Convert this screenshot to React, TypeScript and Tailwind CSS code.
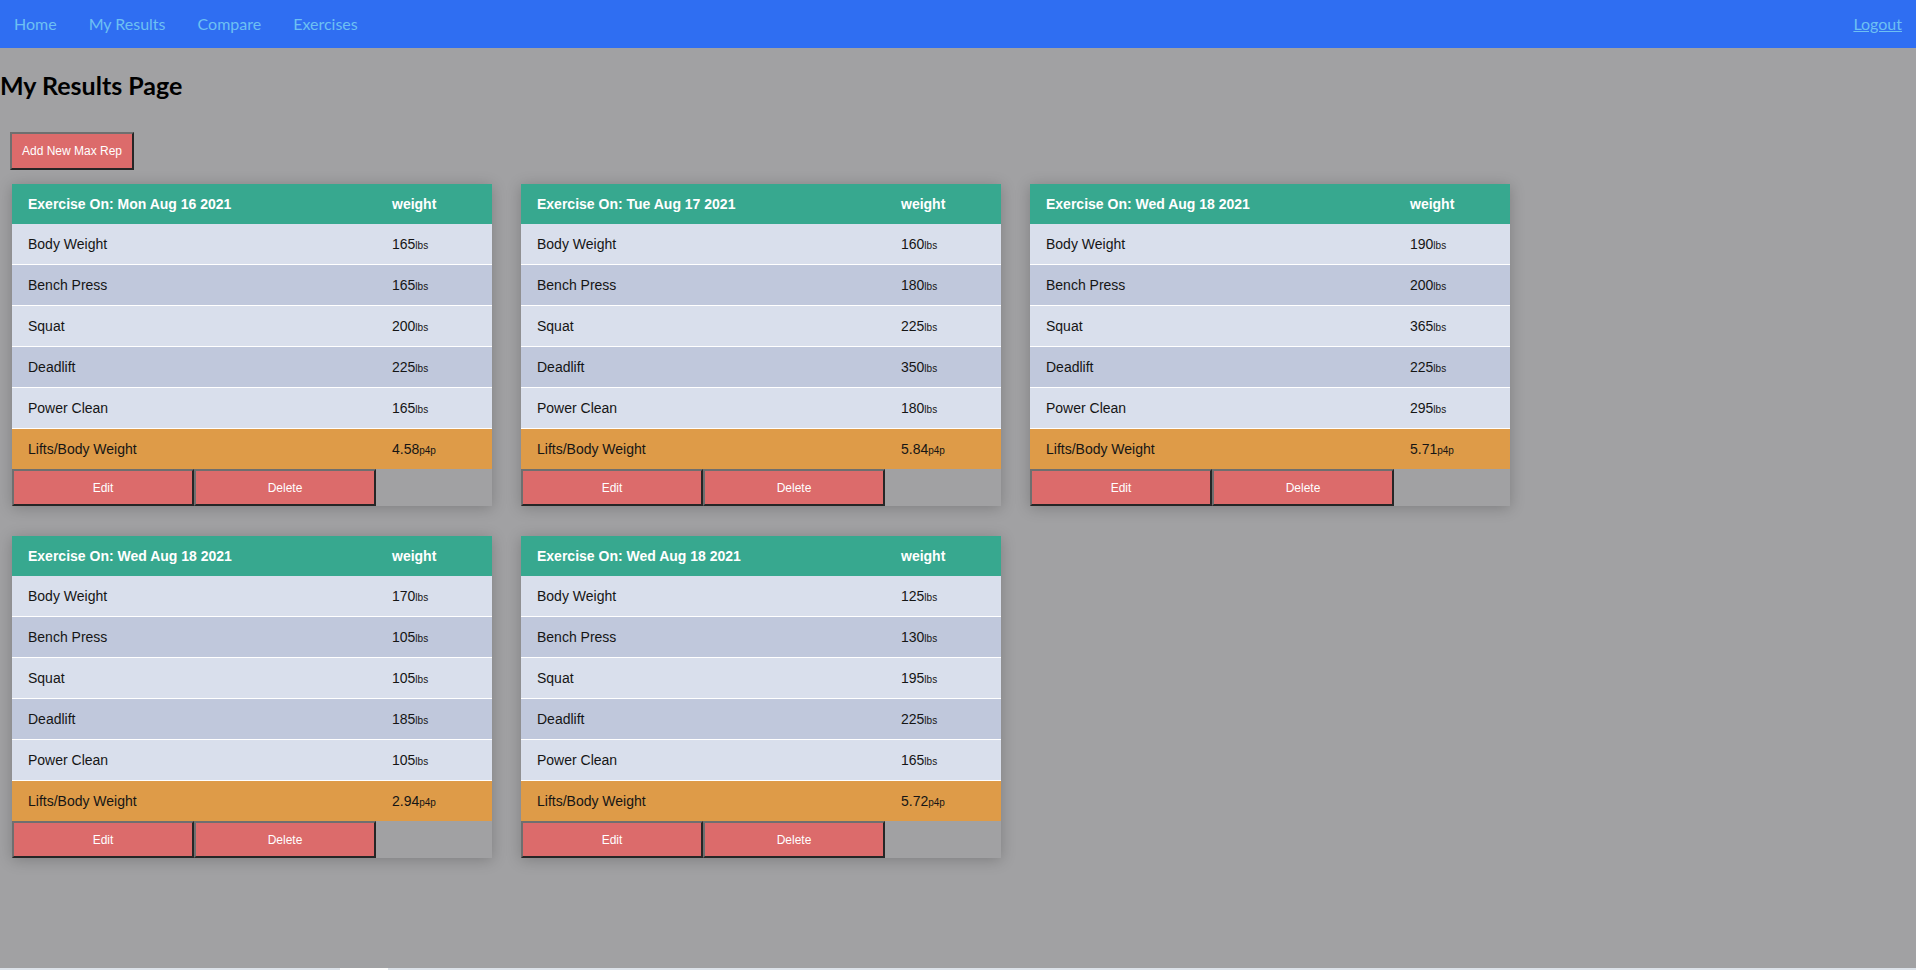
import React from "react";

type Entry = {
  date: string;
  body: number;
  bench: number;
  squat: number;
  dead: number;
  clean: number;
  ratio: string;
};

const entries: Entry[] = [
  { date: "Mon Aug 16 2021", body: 165, bench: 165, squat: 200, dead: 225, clean: 165, ratio: "4.58" },
  { date: "Tue Aug 17 2021", body: 160, bench: 180, squat: 225, dead: 350, clean: 180, ratio: "5.84" },
  { date: "Wed Aug 18 2021", body: 190, bench: 200, squat: 365, dead: 225, clean: 295, ratio: "5.71" },
  { date: "Wed Aug 18 2021", body: 170, bench: 105, squat: 105, dead: 185, clean: 105, ratio: "2.94" },
  { date: "Wed Aug 18 2021", body: 125, bench: 130, squat: 195, dead: 225, clean: 165, ratio: "5.72" },
];

const arial = { fontFamily: '"Liberation Sans", Arial, sans-serif' };

function Row({ label, value, unit, bg, border = true }: { label: string; value: string | number; unit: string; bg: string; border?: boolean }) {
  return (
    <div className={`grid grid-cols-[364px_116px] h-[41px] ${bg} ${border ? "border-b border-white" : ""}`}>
      <div className="flex items-center pl-4 text-[14px] text-[#151515]">{label}</div>
      <div className="flex items-center pl-4 text-[14px] text-[#151515]">
        <span>{value}</span>
        <span className="text-[10px] relative top-[1px]">{unit}</span>
      </div>
    </div>
  );
}

function Card({ e }: { e: Entry }) {
  return (
    <div className="w-[480px] shadow-[0_2px_14px_rgba(0,0,0,0.22)]" style={arial}>
      <div className="grid grid-cols-[364px_116px] h-[40px] bg-[#37a88f] text-white font-bold text-[14px]">
        <div className="flex items-center pl-4">Exercise On: {e.date}</div>
        <div className="flex items-center pl-4">weight</div>
      </div>
      <Row label="Body Weight" value={e.body} unit="lbs" bg="bg-[#d9dfec]" />
      <Row label="Bench Press" value={e.bench} unit="lbs" bg="bg-[#c0c8dc]" />
      <Row label="Squat" value={e.squat} unit="lbs" bg="bg-[#d9dfec]" />
      <Row label="Deadlift" value={e.dead} unit="lbs" bg="bg-[#c0c8dc]" />
      <Row label="Power Clean" value={e.clean} unit="lbs" bg="bg-[#d9dfec]" />
      <div className="grid grid-cols-[364px_116px] h-[40px] bg-[#de9b48]">
        <div className="flex items-center pl-4 text-[14px] text-[#151515]">Lifts/Body Weight</div>
        <div className="flex items-center pl-4 text-[14px] text-[#151515]">
          <span>{e.ratio}</span>
          <span className="text-[10px] relative top-[1px]">p4p</span>
        </div>
      </div>
      <div className="grid grid-cols-[364px_116px] h-[37px] bg-[#a1a1a3]">
        <div className="flex">
          <button className="w-1/2 h-full bg-[#dc6b6b] text-white text-[12px] border-2 border-t-[#6f6f6f] border-l-[#6f6f6f] border-r-[#262626] border-b-[#262626]" style={arial}>
            Edit
          </button>
          <button className="w-1/2 h-full bg-[#dc6b6b] text-white text-[12px] border-2 border-t-[#6f6f6f] border-l-[#6f6f6f] border-r-[#262626] border-b-[#262626]" style={arial}>
            Delete
          </button>
        </div>
        <div />
      </div>
    </div>
  );
}

export default function App() {
  return (
    <div className="min-h-screen h-[970px] flex flex-col bg-[#a1a1a3]" style={{ fontFamily: 'Lato, "Noto Sans", sans-serif' }}>
      <nav className="h-[48px] bg-[#2f6ef2] flex items-center justify-between pl-[14px] pr-[14px] text-[16px] text-[#6dc0f3]">
        <div className="flex items-center gap-[32px]">
          <a>Home</a>
          <a>My Results</a>
          <a>Compare</a>
          <a>Exercises</a>
        </div>
        <a className="underline">Logout</a>
      </nav>
      <main className="flex-1">
        <h1 className="mt-[21px] h-[32px] leading-[32px] text-[25px] font-bold text-black">My Results Page</h1>
        <div className="pl-[10px] mt-[31px]">
          <button
            className="w-[124px] h-[38px] bg-[#dc6b6b] text-white text-[12px] border-2 border-t-[#6f6f6f] border-l-[#6f6f6f] border-r-[#262626] border-b-[#262626]"
            style={arial}
          >
            Add New Max Rep
          </button>
        </div>
        <div className="mt-[14px] pl-[12px] flex flex-wrap gap-x-[29px] gap-y-[30px] w-[1560px]">
          {entries.map((e, i) => (
            <Card key={i} e={e} />
          ))}
        </div>
      </main>
      <div className="h-[2px] bg-[#dde3ea] flex">
        <div className="ml-[340px] w-[48px] bg-white" />
      </div>
    </div>
  );
}
